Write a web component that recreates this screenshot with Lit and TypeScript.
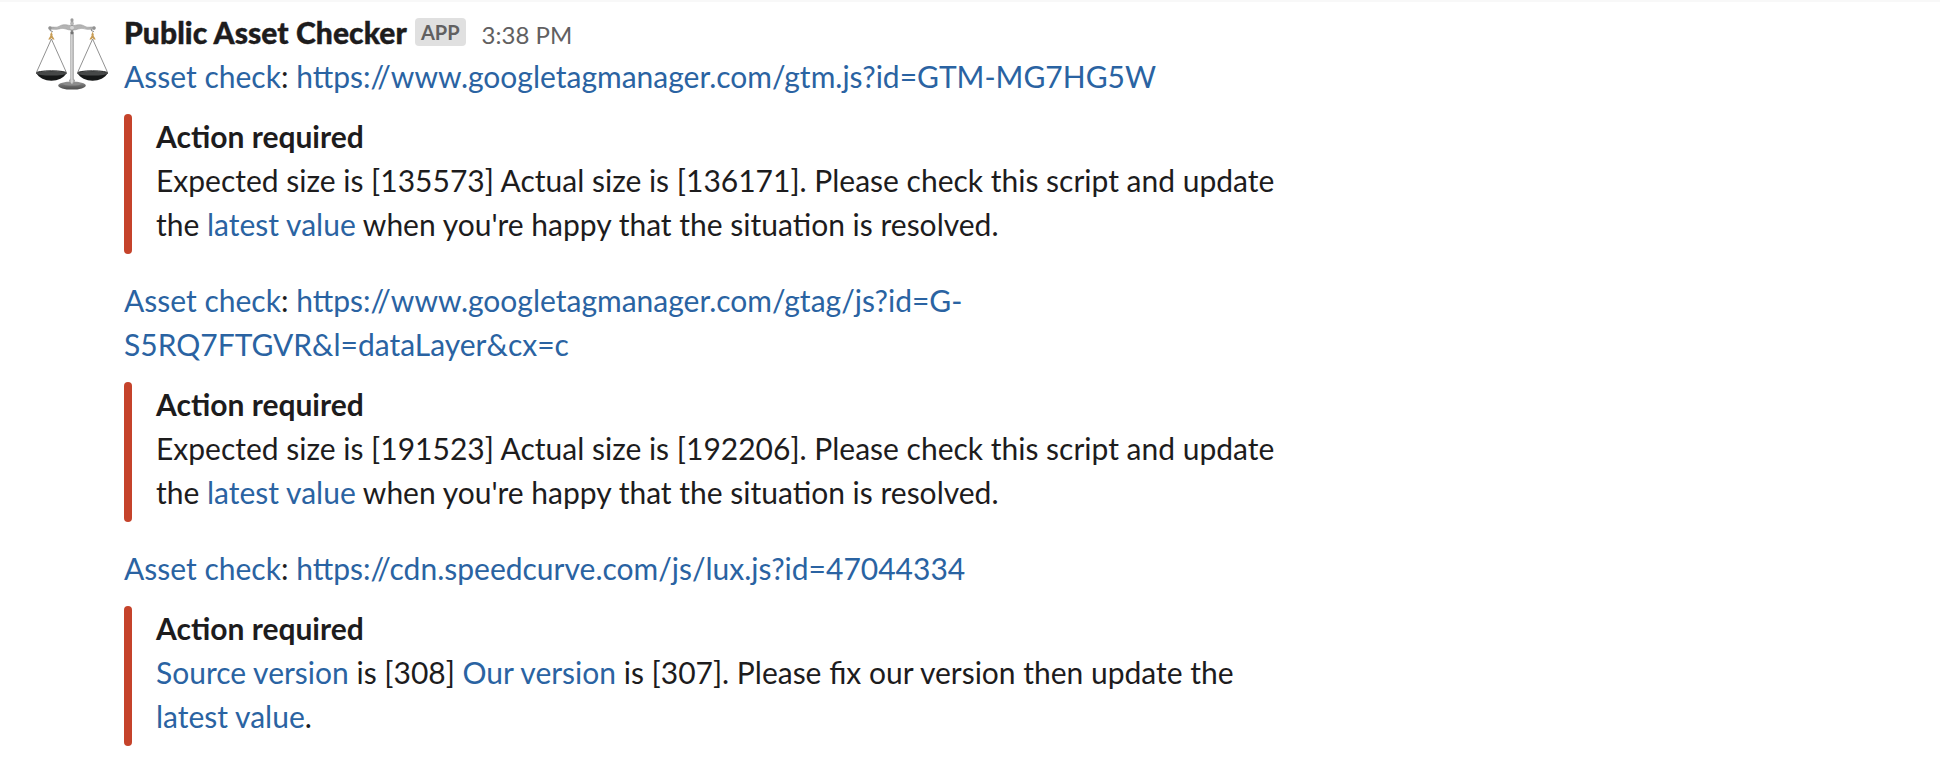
import { LitElement, html, css, svg, TemplateResult } from "lit";
import { customElement, property } from "lit/decorators.js";

@customElement("scales-avatar")
class ScalesAvatar extends LitElement {
  static styles = css`
    :host { display: block; width: 72px; height: 72px; }
    svg { display: block; width: 72px; height: 72px; }
  `;
  private pan(x: number) {
    return svg`
      <path d="M${x} 21 L${x - 15} 54.5 M${x} 21 L${x + 15} 54.5" fill="none" stroke="#858585" stroke-width="0.9"/>
      <path d="M${x - 15.3} 54.8 C${x - 10} 65.4 ${x + 10} 65.4 ${x + 15.3} 54.8 Z" fill="#161818"/>
      <ellipse cx="${x}" cy="55.3" rx="15.2" ry="2.3" fill="#464848"/>
      <path d="M${x - 15.2} 55.1 a15.2 2.3 0 0 1 30.4 0" fill="none" stroke="#202222" stroke-width="1"/>
      <path d="M${x - 1.2} 11 v1.2 c0 1.2 2.6 .6 2.2 2" fill="none" stroke="#8c8c8c" stroke-width="1.1"/>
      <path d="M${x} 13.8 l1.2 2.6 -.2 1.4 2.2 3.8 h-1.9 l-1.3 -1.6 -1.3 1.6 h-1.9 l2.2 -3.8 -.2 -1.4 z" fill="#c79c55"/>`;
  }
  render() {
    return html`<svg viewBox="0 0 72 72" aria-hidden="true">
      <defs>
        <linearGradient id="post"><stop offset="0" stop-color="#808080"/><stop offset=".45" stop-color="#d8d8d8"/><stop offset="1" stop-color="#7c7c7c"/></linearGradient>
        <linearGradient id="foot" x2="0" y2="1"><stop offset="0" stop-color="#9c9c9c"/><stop offset=".5" stop-color="#6b6b6b"/><stop offset="1" stop-color="#4a4a4a"/></linearGradient>
      </defs>
      <ellipse cx="36" cy="67.6" rx="13.8" ry="4" fill="url(#foot)"/>
      <ellipse cx="36" cy="66" rx="9" ry="1.6" fill="#8c8c8c"/>
      ${this.pan(15.4)}${this.pan(56.6)}
      <path d="M34.2 14 h3.6 v46.5 l1.2 2.5 -3 3 -3 -3 1.2 -2.5 z" fill="url(#post)"/>
      <path d="M13 9.1 C18 8.7 20 10 23 8.4 C27 5.7 31 6.8 36 8 C41 6.8 45 5.7 49 8.4 C52 10 54 8.7 59 9.1 V11.2 C54 10.9 52 12.1 47.5 10.6 C44 9.4 41 12.4 36 12 C31 12.4 28 9.4 24.5 10.6 C20 12.1 18 10.9 13 11.2 Z" fill="#b4b4b4" stroke="#8c8c8c" stroke-width=".5"/>
      <circle cx="14" cy="10" r="1.7" fill="#929292"/><circle cx="58" cy="10" r="1.7" fill="#929292"/>
      <circle cx="36" cy="1.9" r="1.6" fill="#9c9c9c"/>
      <path d="M34.7 3.2 h2.6 v11 h-2.6 z" fill="#929292"/>
      <circle cx="36" cy="5.6" r="1.7" fill="#b8b8b8"/>
      <circle cx="36" cy="9.8" r="2" fill="#d6d6d6"/><circle cx="36" cy="15" r="1.4" fill="#737373"/>
      <circle cx="36" cy="63" r="1.3" fill="#d2d2d2"/>
    </svg>`;
  }
}

@customElement("asset-check")
class AssetCheck extends LitElement {
  static styles = css`
    :host { display: block; }
    .link { color: #2a63a2; text-decoration: none; }
    .note { display: grid; grid-template-columns: 8px 1fr; column-gap: 24px; margin-top: 16px; height: 140px; }
    .bar { background: #c5432b; border-radius: 4px; }
    .title { font-weight: 700; }
  `;
  @property({ attribute: false }) url: unknown;
  render() {
    return html`<div><a class="link">Asset check</a>: <a class="link">${this.url}</a></div>
      <div class="note"><div class="bar"></div><div><div class="title">Action required</div><div><slot></slot></div></div></div>`;
  }
}

@customElement("app-root")
class AppRoot extends LitElement {
  static styles = css`
    :host { display: block; box-sizing: border-box; height: 766px; background: #fff; border-top: 2px solid #f8f8f8; font: 30px/44px Lato, sans-serif; color: #1d1c1d; }
    .message { display: grid; grid-template-columns: 72px 1200px; column-gap: 16px; padding: 8px 0 0 36px; }
    .avatar { margin-top: 8px; }
    .head { display: flex; align-items: baseline; height: 44px; }
    .name { font-weight: 900; letter-spacing: 0.08px; -webkit-text-stroke: 0.4px #1d1c1d; }
    .badge { margin-left: 8px; padding: 0 6px; height: 28px; border-radius: 4px; background: #e0e0e0; color: #616061; font: 700 20px/28px Lato, sans-serif; align-self: flex-start; margin-top: 8px; }
    .time { margin-left: 16px; font-size: 24px; color: #616061; }
    .checks { display: grid; row-gap: 24px; }
    .link { color: #2a63a2; }
  `;
  private size(expected: number, actual: number): TemplateResult {
    return html`Expected size is [${expected}] Actual size is [${actual}]. Please check this script and update<br>the <a class="link">latest value</a> when you're happy that the situation is resolved.`;
  }
  render() {
    return html`<div class="message"><scales-avatar class="avatar"></scales-avatar><div>
      <div class="head"><span class="name">Public Asset Checker</span><span class="badge">APP</span><span class="time">3:38 PM</span></div>
      <div class="checks">
        <asset-check .url=${"https://www.googletagmanager.com/gtm.js?id=GTM-MG7HG5W"}>${this.size(135573, 136171)}</asset-check>
        <asset-check .url=${html`https://www.googletagmanager.com/gtag/js?id=G-<br>S5RQ7FTGVR&amp;l=dataLayer&amp;cx=c`}>${this.size(191523, 192206)}</asset-check>
        <asset-check .url=${"https://cdn.speedcurve.com/js/lux.js?id=47044334"}><a class="link">Source version</a> is [308] <a class="link">Our version</a> is [307]. Please fix our version then update the<br><a class="link">latest value</a>.</asset-check>
      </div>
    </div></div>`;
  }
}
